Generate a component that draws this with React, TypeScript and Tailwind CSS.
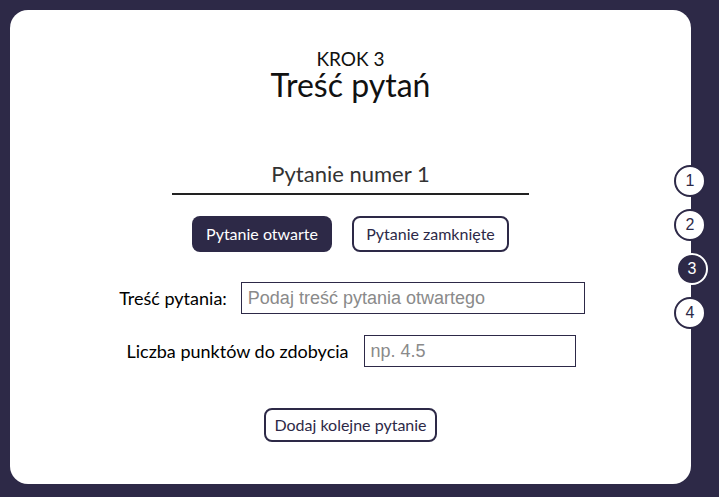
import React from "react";

export default function App() {
  const steps = [1, 2, 3, 4];
  return (
    <div className="w-[719px] h-[497px] bg-[#2d2947] p-[10px] pb-[13px] pr-[28px] overflow-hidden" style={{ fontFamily: "Lato, 'Noto Sans', sans-serif" }}>
      <div className="relative w-[681px] h-[474px] bg-white rounded-[18px] flex flex-col items-center pt-[38px]">
        <div className="text-[19px] leading-[22px] text-[#111]">KROK 3</div>
        <div className="text-[32px] leading-[30px] text-[#111]">Treść pytań</div>

        <div className="mt-[61px] w-[357px] flex flex-col items-center">
          <div className="text-[22px] leading-[26px] text-[#333]">Pytanie numer 1</div>
          <div className="mt-[6px] w-full h-[2px] bg-[#222]" />
        </div>

        <div className="mt-[21px] flex gap-[20px]">
          <button className="h-[36px] w-[140px] rounded-[8px] bg-[#2d2947] text-white text-[16px]">Pytanie otwarte</button>
          <button className="h-[36px] w-[157px] rounded-[8px] border-2 border-[#2d2947] bg-white text-[#2d2947] text-[16px]">Pytanie zamknięte</button>
        </div>

        <div className="mt-[30px] flex items-center gap-[14px] pl-[3px]">
          <span className="text-[18px] leading-[24px] text-black">Treść pytania:</span>
          <input
            className="w-[344px] h-[32px] border border-[#2d2947] px-[6px] text-[18px] placeholder:text-[#8a8a8a] outline-none"
            style={{ fontFamily: "'Liberation Sans', Arial, sans-serif" }}
            placeholder="Podaj treść pytania otwartego"
          />
        </div>

        <div className="mt-[21px] flex items-center gap-[15px] pl-[1px]">
          <span className="text-[18px] leading-[24px] text-black">Liczba punktów do zdobycia</span>
          <input
            className="w-[212px] h-[32px] border border-[#2d2947] px-[6px] text-[18px] placeholder:text-[#8a8a8a] outline-none"
            style={{ fontFamily: "'Liberation Sans', Arial, sans-serif" }}
            placeholder="np. 4.5"
          />
        </div>

        <button className="mt-[41px] h-[34px] w-[173px] rounded-[8px] border-2 border-[#2d2947] bg-white text-[#2d2947] text-[16px]">Dodaj kolejne pytanie</button>

        <div className="absolute left-[664px] top-[155px] flex flex-col gap-[12px]">
          {steps.map((n) => (
            <div
              key={n}
              className={
                n === 3
                  ? "w-[32px] h-[32px] rounded-full bg-[#2d2947] border-2 border-white text-white flex items-center justify-center text-[16px] translate-x-[2px]"
                  : "w-[32px] h-[32px] rounded-full bg-white border-2 border-[#2d2947] text-[#2d2947] flex items-center justify-center text-[16px]"
              }
              style={{ fontFamily: "'Liberation Sans', Arial, sans-serif" }}
            >
              {n}
            </div>
          ))}
        </div>
      </div>
    </div>
  );
}
